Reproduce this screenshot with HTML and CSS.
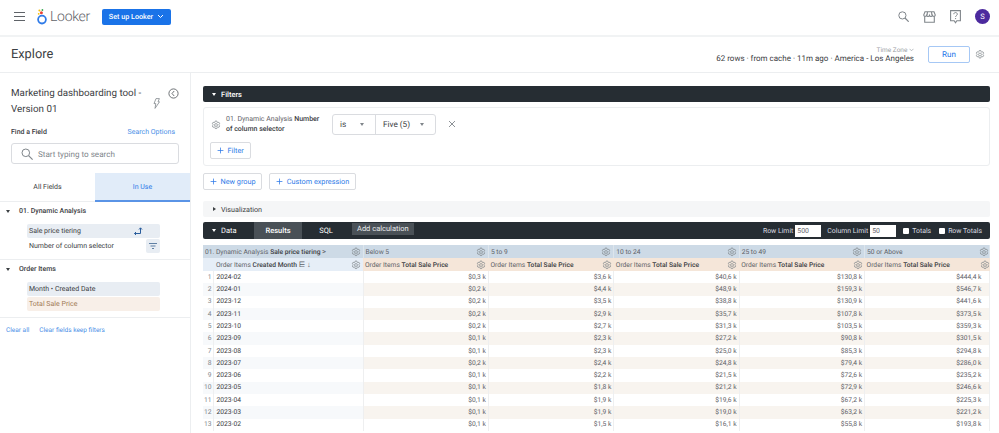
FILE: index.html
```html
<!DOCTYPE html>
<html lang="en">
<head>
    <meta charset="UTF-8">
    <meta name="viewport" content="width=device-width, initial-scale=1.0">
    <title>Explore</title>
    <link rel="stylesheet" href="styles.css">
</head>
<body>
    <svg class="icon-defs" width="0" height="0">
        <symbol id="gear" viewBox="0 0 24 24">
            <path fill="none" stroke="currentColor" stroke-width="1.7" stroke-linejoin="round" d="M10 2.5h4l.6 2.9 1.6.9 2.8-.9 2 3.4-2.2 2v1.4l2.2 2-2 3.4-2.8-.9-1.6.9-.6 2.9h-4l-.6-2.9-1.6-.9-2.8.9-2-3.4 2.2-2v-1.4l-2.2-2 2-3.4 2.8.9 1.6-.9z"/>
            <circle cx="12" cy="12" r="3.4" fill="none" stroke="currentColor" stroke-width="1.7"/>
        </symbol>
        <symbol id="plus" viewBox="0 0 12 12">
            <path fill="none" stroke="currentColor" stroke-width="1.3" d="M6 1v10M1 6h10"/>
        </symbol>
    </svg>

    <header class="topbar">
        <button class="menu-btn" aria-label="Menu"><span></span><span></span><span></span></button>
        <div class="logo">
            <svg width="10" height="16" viewBox="0 0 10 16">
                <circle cx="5" cy="10.6" r="3.900" fill="none" stroke="#2f7be8" stroke-width="1.800"/>
                <circle cx="4.400" cy="3.800" r="1.500" fill="#ea4335"/>
                <circle cx="2.400" cy="1.500" r="1" fill="#fbbc04"/>
                <circle cx="5.400" cy="1" r=".9" fill="#34a853"/>
                <circle cx="1.700" cy="4.800" r=".9" fill="#fbbc04"/>
            </svg>
            <span class="logo-text">Looker</span>
        </div>
        <button class="setup-btn">Set up Looker
            <svg width="7" height="5" viewBox="0 0 7 5"><path d="M1 1l2.5 2.5L6 1" fill="none" stroke="#fff" stroke-width="1"/></svg>
        </button>
        <div class="topbar-icons">
            <svg width="11" height="11" viewBox="0 0 11 11"><circle cx="4.400" cy="4.400" r="3.600" fill="none" stroke="#80868b" stroke-width="1"/><path d="M7 7l3.700 3.700" stroke="#80868b" stroke-width="1.200"/></svg>
            <svg width="13" height="12" viewBox="0 0 13 12"><path d="M2 .7h9l1.3 3.4c0 1.700-2.400 1.700-2.900.2-.4 1.500-2.400 1.500-2.900 0-.5 1.500-2.500 1.500-2.900 0-.5 1.500-2.900 1.500-2.900-.2zM1.700 5.500v5.800h9.600V5.500M4.500 .7l-.4 3.400M8.500 .7l.4 3.400" fill="none" stroke="#80868b" stroke-width="1.100"/></svg>
            <svg width="11" height="14" viewBox="0 0 11 14"><path d="M.6 .6h9.800v10.200H6.800l-1.300 2-1.300-2H.6z" fill="none" stroke="#80868b" stroke-width="1.100"/><path d="M3.800 4.200c0-2.200 3.500-2.200 3.500 0 0 1.400-1.700 1.300-1.700 2.800M5.600 8v1.100" fill="none" stroke="#80868b" stroke-width="1"/></svg>
            <div class="avatar">S</div>
        </div>
    </header>

    <div class="subbar">
        <h1>Explore</h1>
        <div class="run-info">
            <div class="timezone">Time Zone <svg width="5" height="4" viewBox="0 0 5 4"><path d="M.5 .8l2 2 2-2" fill="none" stroke="#9aa0a6" stroke-width=".7"/></svg></div>
            <div>62 rows · from cache · 11m ago · America - Los Angeles</div>
        </div>
        <button class="run-btn">Run</button>
        <svg class="gear run-gear"><use href="#gear"/></svg>
    </div>

    <div class="content">
        <aside class="sidebar">
            <div class="title-row">
                <h2>Marketing dashboarding tool - Version 01</h2>
                <svg class="bolt" width="7" height="11" viewBox="0 0 7 11"><path d="M3 .6h3.400L5 3.800h1.500L2 10.400l.8-4.800H1z" fill="none" stroke="#80868b" stroke-width=".8"/></svg>
                <svg class="history" width="11" height="11" viewBox="0 0 11 11"><circle cx="5.500" cy="5.500" r="4.600" fill="none" stroke="#5f6368" stroke-width=".9"/><path d="M6.200 3L4 5.500 6.200 8" fill="none" stroke="#5f6368" stroke-width=".9"/></svg>
            </div>
            <div class="find-row">
                <span class="find-label">Find a Field</span>
                <a class="link">Search Options</a>
            </div>
            <div class="search-box">
                <svg width="12" height="12" viewBox="0 0 12 12"><circle cx="4.800" cy="4.800" r="3.800" fill="none" stroke="#80868b" stroke-width="1"/><path d="M7.600 7.600l4 4" stroke="#80868b" stroke-width="1.100"/></svg>
                <span>Start typing to search</span>
            </div>
            <div class="tabs">
                <div class="tab">All Fields</div>
                <div class="tab tab-active">In Use</div>
            </div>
            <section class="field-group">
                <div class="group-title"><i class="caret"></i>01. Dynamic Analysis</div>
                <div class="field field-dim">Sale price tiering
                    <svg class="pivot" width="9" height="8" viewBox="0 0 9 8"><path d="M.5 6.500h6V1M5 2.500L6.500 .8 8 2.500M2 5L.5 6.500 2 8" fill="none" stroke="#2a5d9c" stroke-width="1"/></svg>
                </div>
                <div class="field">Number of column selector
                    <span class="filter-chip"><svg width="8" height="6" viewBox="0 0 8 6"><path d="M0 .5h8M1.500 3h5M3 5.500h2" stroke="#5f7fa3" stroke-width="1"/></svg></span>
                </div>
            </section>
            <section class="field-group">
                <div class="group-title"><i class="caret"></i>Order Items</div>
                <div class="field field-dim">Month • Created Date</div>
                <div class="field field-measure">Total Sale Price</div>
            </section>
            <div class="clear-links">
                <a class="link">Clear all</a>
                <a class="link">Clear fields keep filters</a>
            </div>
        </aside>

        <main class="main">
            <div class="dark-bar filters-bar"><i class="caret caret-white"></i>Filters</div>
            <div class="filter-card">
                <div class="filter-row">
                    <svg class="gear filter-gear"><use href="#gear"/></svg>
                    <div class="filter-name">01. Dynamic Analysis <b>Number</b><br><b>of column selector</b></div>
                    <div class="select-group">
                        <div class="select select-is">is<i class="caret caret-gray"></i></div>
                        <div class="select select-five">Five (5)<i class="caret caret-gray"></i></div>
                    </div>
                    <svg class="close" width="8" height="8" viewBox="0 0 8 8"><path d="M1 1l6 6M7 1L1 7" stroke="#80868b" stroke-width=".9"/></svg>
                </div>
                <button class="outline-btn filter-btn"><svg class="plus"><use href="#plus"/></svg>Filter</button>
            </div>
            <div class="group-actions">
                <button class="outline-btn"><svg class="plus"><use href="#plus"/></svg>New group</button>
                <button class="outline-btn"><svg class="plus"><use href="#plus"/></svg>Custom expression</button>
            </div>
            <div class="viz-bar"><i class="caret-right"></i>Visualization</div>
            <div class="dark-bar data-bar">
                <span class="data-label"><i class="caret caret-white"></i>Data</span>
                <span class="data-tab data-tab-active">Results</span>
                <span class="data-tab">SQL</span>
                <span class="add-calc">Add calculation</span>
                <div class="limits">
                    <label>Row Limit <span class="limit-input">500</span></label>
                    <label>Column Limit <span class="limit-input">50</span></label>
                    <label class="totals"><span class="check"></span>Totals</label>
                    <label class="row-totals"><span class="check"></span>Row Totals</label>
                </div>
            </div>
            <table class="results">
                <colgroup>
                    <col class="col-index"><col class="col-dim">
                    <col class="col-val"><col class="col-val"><col class="col-val"><col class="col-val"><col class="col-val">
                </colgroup>
                <thead>
                    <tr class="pivot-row">
                        <th colspan="2"><div class="th-wrap"><span>01. Dynamic Analysis <b>Sale price tiering</b> <span class="chev">&gt;</span></span><svg class="gear"><use href="#gear"/></svg></div></th>
                        <th><div class="th-wrap"><span>Below 5</span><svg class="gear"><use href="#gear"/></svg></div></th>
                        <th><div class="th-wrap"><span>5 to 9</span><svg class="gear"><use href="#gear"/></svg></div></th>
                        <th><div class="th-wrap"><span>10 to 24</span><svg class="gear"><use href="#gear"/></svg></div></th>
                        <th><div class="th-wrap"><span>25 to 49</span><svg class="gear"><use href="#gear"/></svg></div></th>
                        <th><div class="th-wrap"><span>50 or Above</span><svg class="gear"><use href="#gear"/></svg></div></th>
                    </tr>
                    <tr class="label-row">
                        <th colspan="2" class="th-dim"><div class="th-wrap th-indent"><span>Order Items <b>Created Month</b> <span class="sort">⋿ ↓</span></span><svg class="gear"><use href="#gear"/></svg></div></th>
                        <th class="th-measure"><div class="th-wrap"><span>Order Items <b>Total Sale Price</b></span><svg class="gear"><use href="#gear"/></svg></div></th>
                        <th class="th-measure"><div class="th-wrap"><span>Order Items <b>Total Sale Price</b></span><svg class="gear"><use href="#gear"/></svg></div></th>
                        <th class="th-measure"><div class="th-wrap"><span>Order Items <b>Total Sale Price</b></span><svg class="gear"><use href="#gear"/></svg></div></th>
                        <th class="th-measure"><div class="th-wrap"><span>Order Items <b>Total Sale Price</b></span><svg class="gear"><use href="#gear"/></svg></div></th>
                        <th class="th-measure"><div class="th-wrap"><span>Order Items <b>Total Sale Price</b></span><svg class="gear"><use href="#gear"/></svg></div></th>
                    </tr>
                </thead>
                <tbody>
                    <tr><td>1</td><td>2024-02</td><td>$0,3 k</td><td>$3,6 k</td><td>$40,6 k</td><td>$130,8 k</td><td>$444,4 k</td></tr>
                    <tr><td>2</td><td>2024-01</td><td>$0,2 k</td><td>$4,4 k</td><td>$48,9 k</td><td>$159,3 k</td><td>$546,7 k</td></tr>
                    <tr><td>3</td><td>2023-12</td><td>$0,2 k</td><td>$3,5 k</td><td>$38,8 k</td><td>$130,9 k</td><td>$441,6 k</td></tr>
                    <tr><td>4</td><td>2023-11</td><td>$0,2 k</td><td>$2,9 k</td><td>$35,7 k</td><td>$107,8 k</td><td>$373,5 k</td></tr>
                    <tr><td>5</td><td>2023-10</td><td>$0,2 k</td><td>$2,7 k</td><td>$31,3 k</td><td>$103,5 k</td><td>$359,3 k</td></tr>
                    <tr><td>6</td><td>2023-09</td><td>$0,1 k</td><td>$2,3 k</td><td>$27,2 k</td><td>$90,8 k</td><td>$301,5 k</td></tr>
                    <tr><td>7</td><td>2023-08</td><td>$0,1 k</td><td>$2,3 k</td><td>$25,0 k</td><td>$85,3 k</td><td>$294,8 k</td></tr>
                    <tr><td>8</td><td>2023-07</td><td>$0,2 k</td><td>$2,4 k</td><td>$24,8 k</td><td>$79,4 k</td><td>$286,0 k</td></tr>
                    <tr><td>9</td><td>2023-06</td><td>$0,1 k</td><td>$2,2 k</td><td>$21,5 k</td><td>$72,6 k</td><td>$235,2 k</td></tr>
                    <tr><td>10</td><td>2023-05</td><td>$0,1 k</td><td>$1,8 k</td><td>$21,2 k</td><td>$72,9 k</td><td>$246,6 k</td></tr>
                    <tr><td>11</td><td>2023-04</td><td>$0,1 k</td><td>$1,9 k</td><td>$19,6 k</td><td>$67,2 k</td><td>$225,3 k</td></tr>
                    <tr><td>12</td><td>2023-03</td><td>$0,1 k</td><td>$1,9 k</td><td>$19,0 k</td><td>$63,2 k</td><td>$221,2 k</td></tr>
                    <tr><td>13</td><td>2023-02</td><td>$0,1 k</td><td>$1,5 k</td><td>$16,1 k</td><td>$55,8 k</td><td>$193,8 k</td></tr>
                </tbody>
            </table>
        </main>
    </div>
</body>
</html>
```

FILE: styles.css
```css
* {
    box-sizing: border-box;
}

html, body {
    height: 433px;
}

body {
    margin: 0;
    font-family: Roboto, 'Liberation Sans', sans-serif;
    color: #3c4043;
    background-color: #fff;
    overflow: hidden;
    text-rendering: geometricPrecision;
}

button {
    font-family: inherit;
    text-rendering: inherit;
    cursor: pointer;
}

.icon-defs {
    position: absolute;
}

.link {
    color: #4a8fe7;
}

.gear {
    width: 10px;
    height: 10px;
    color: #80868b;
    flex-shrink: 0;
}

.plus {
    width: 7px;
    height: 7px;
    margin-right: 4px;
}

/* small triangles */
.caret {
    display: inline-block;
    width: 0;
    height: 0;
    border-left: 2.5px solid transparent;
    border-right: 2.5px solid transparent;
    border-top: 3px solid #3c4043;
}

.caret-white {
    border-top-color: #fff;
}

.caret-gray {
    border-top-color: #80868b;
}

.caret-right {
    width: 0;
    height: 0;
    border-top: 2.5px solid transparent;
    border-bottom: 2.5px solid transparent;
    border-left: 3px solid #3c4043;
    margin-right: 5px;
}

/* top bar */
.topbar {
    height: 37px;
    display: flex;
    align-items: center;
    padding: 0 9px 2px 14px;
    border-bottom: 2px solid #f1f3f4;
}

.menu-btn {
    width: 11px;
    height: 9px;
    padding: 0;
    border: none;
    background: none;
    display: flex;
    flex-direction: column;
    justify-content: space-between;
}

.menu-btn span {
    display: block;
    height: 1px;
    background-color: #5f6368;
}

.logo {
    display: flex;
    align-items: center;
    margin-left: 12px;
    gap: 3px;
}

.logo-text {
    font-size: 14px;
    font-weight: 300;
    letter-spacing: -0.3px;
    color: #5f6368;
}

.setup-btn {
    height: 16px;
    width: 69px;
    margin-left: 12px;
    padding: 0;
    border: none;
    border-radius: 2px;
    background-color: #1a73e8;
    color: #fff;
    font-size: 7.2px;
    font-weight: 500;
    display: flex;
    align-items: center;
    justify-content: center;
    gap: 4px;
}

.topbar-icons {
    margin-left: auto;
    display: flex;
    align-items: center;
    gap: 14px;
}

.avatar {
    width: 15px;
    height: 15px;
    border-radius: 50%;
    background-color: #4c2a9e;
    color: #fff;
    font-size: 7.5px;
    display: flex;
    align-items: center;
    justify-content: center;
}

/* explore bar */
.subbar {
    height: 36px;
    display: flex;
    align-items: center;
    padding: 0 14px 0 11px;
    border-bottom: 1px solid #eceef0;
}

.subbar h1 {
    margin: 0;
    font-size: 12.8px;
    font-weight: 400;
    color: #3c4043;
    margin-right: auto;
}

.run-info {
    font-size: 8px;
    text-align: right;
    line-height: 9px;
    color: #3c4043;
}

.timezone {
    font-size: 6.5px;
    color: #9aa0a6;
    line-height: 7px;
}

.run-btn {
    width: 42px;
    height: 17px;
    margin-left: 14px;
    padding: 0;
    border: 1px solid #a6c8f5;
    border-radius: 2px;
    background-color: #fff;
    color: #1a73e8;
    font-size: 8px;
}

.run-gear {
    width: 10px;
    height: 11px;
    margin-left: 5px;
}

.content {
    display: flex;
    height: 360px;
}

/* left column */
.sidebar {
    width: 191px;
    flex-shrink: 0;
    border-right: 1px solid #eceef0;
}

.title-row {
    display: flex;
    padding: 13px 0 0 11px;
    height: 55px;
}

.title-row h2 {
    width: 140px;
    margin: 0;
    font-size: 9.8px;
    font-weight: 400;
    line-height: 16px;
    color: #3c4043;
}

.bolt {
    margin: 12px 0 0 1.5px;
}

.history {
    margin: 2px 0 0 8.5px;
}

.find-row {
    display: flex;
    justify-content: space-between;
    padding: 0 15px 0 11px;
    font-size: 7px;
    line-height: 9px;
    height: 15px;
}

.find-label {
    font-weight: 500;
}

.search-box {
    height: 21px;
    margin: 0 11px;
    padding-left: 9px;
    display: flex;
    align-items: center;
    gap: 5px;
    border: 1px solid #dadce0;
    border-radius: 3px;
    font-size: 8.1px;
    color: #80868b;
}

.tabs {
    display: flex;
    margin-top: 9px;
    height: 29px;
}

.tab {
    flex: 1;
    display: flex;
    align-items: center;
    justify-content: center;
    font-size: 7px;
    border-bottom: 1px solid #eceef0;
}

.tab-active {
    background-color: #e1ecf9;
    color: #2f7be8;
    border-bottom: 2px solid #5a94e6;
}

.field-group {
    padding-bottom: 5px;
    border-bottom: 1px solid #eceef0;
}

.group-title {
    display: flex;
    align-items: center;
    height: 22px;
    padding: 0 0 4px 6px;
    font-size: 7px;
    font-weight: 500;
}

.group-title .caret {
    margin-right: 9px;
}

.field {
    width: 133px;
    height: 14px;
    margin: 0 0 1px 27px;
    padding-left: 2px;
    display: flex;
    align-items: center;
    justify-content: space-between;
    border-radius: 2px;
    font-size: 7px;
}

.field-dim {
    background-color: #e8edf3;
}

.field-measure {
    background-color: #f8efe8;
    color: #a07a55;
}

.pivot {
    margin-right: 17px;
}

.filter-chip {
    width: 14px;
    height: 14px;
    display: flex;
    align-items: center;
    justify-content: center;
    background-color: #e8edf3;
    border-radius: 2px;
}

.clear-links {
    padding: 8px 0 0 6px;
    font-size: 6.5px;
    display: flex;
    gap: 10px;
}

/* right column */
.main {
    flex: 1;
    min-width: 0;
    padding: 13px 9px 0 12px;
}

.dark-bar {
    display: flex;
    align-items: center;
    background-color: #262d33;
    color: #fff;
    border-radius: 2px;
    font-size: 7.500px;
}

.filters-bar {
    height: 16px;
    padding-left: 9px;
    font-weight: 500;
}

.filters-bar .caret {
    margin-right: 5px;
}

.filter-card {
    height: 59px;
    margin-top: 5px;
    padding: 7px 6px 0;
    border: 1px solid #eceef0;
    border-radius: 3px;
}

.filter-row {
    display: flex;
    align-items: flex-start;
    height: 27px;
}

.filter-gear {
    margin: 5px 5px 0 1px;
}

.filter-name {
    width: 106px;
    font-size: 7px;
    line-height: 9.500px;
    color: #5f6368;
}

.filter-name b {
    font-weight: 500;
    color: #3c4043;
}

.select-group {
    display: flex;
    height: 21px;
    margin: -1px 0 0 0;
    border: 1px solid #dadce0;
    border-radius: 3px;
    font-size: 8.2px;
}

.select {
    display: flex;
    align-items: center;
    justify-content: space-between;
    padding: 0 11px 0 7px;
}

.select-is {
    width: 43px;
    border-right: 1px solid #dadce0;
}

.select-five {
    width: 59px;
}

.close {
    margin: 5px 0 0 12px;
}

.outline-btn {
    height: 17px;
    padding: 0 5.5px;
    display: inline-flex;
    align-items: center;
    background-color: #fff;
    border: 1px solid #dadce0;
    border-radius: 2px;
    color: #2f7be8;
    font-size: 7.3px;
}

.filter-btn {
    display: flex;
    width: 41px;
}

.group-actions {
    display: flex;
    gap: 7px;
    margin-top: 7px;
}

.viz-bar {
    display: flex;
    align-items: center;
    height: 16px;
    margin-top: 11px;
    padding-left: 10px;
    background-color: #f5f6f7;
    border-radius: 2px;
    font-size: 7.2px;
}

.data-bar {
    height: 17px;
    margin-top: 5px;
}

.data-label {
    display: flex;
    align-items: center;
    width: 51px;
    padding-left: 9px;
}

.data-label .caret {
    margin-right: 5px;
}

.data-tab {
    display: flex;
    align-items: center;
    justify-content: center;
    height: 100%;
    width: 48px;
}

.data-tab-active {
    background-color: #4a5157;
    font-weight: 500;
}

.add-calc {
    height: 12px;
    margin: -4px 0 0 2px;
    padding: 0 5px;
    display: flex;
    align-items: center;
    background-color: #4a5157;
    color: #e8eaed;
}

.limits {
    margin-left: auto;
    display: flex;
    align-items: center;
    gap: 6px;
    padding-right: 8px;
    font-size: 6.900px;
    color: #dadce0;
}

.limits label {
    display: flex;
    align-items: center;
    gap: 1px;
}

.limits .totals {
    margin-left: 1px;
}

.limits .row-totals {
    margin-left: 2px;
}

.limit-input {
    width: 26px;
    height: 12px;
    margin-left: 1px;
    padding-left: 2px;
    display: flex;
    align-items: center;
    background-color: #fff;
    color: #5f6368;
}

.check {
    width: 6px;
    height: 6px;
    margin-right: 2px;
    background-color: #fff;
    border-radius: 1px;
}

/* results table */
.results {
    width: 787px;
    margin-top: 6px;
    border-collapse: collapse;
    table-layout: fixed;
    font-size: 6.700px;
    color: #5f6368;
}

.col-index {
    width: 10px;
}

.col-dim {
    width: 150px;
}

.col-val {
    width: 125.400px;
}

.results th {
    height: 13px;
    padding: 0;
    font-weight: 400;
    text-align: left;
    white-space: nowrap;
}

.results b {
    font-weight: 500;
    color: #3c4043;
}

.th-wrap {
    display: flex;
    align-items: center;
    justify-content: space-between;
    padding: 0 2px;
}

.results th:last-child .th-wrap {
    padding-right: 0;
}

.th-indent {
    padding-left: 13px;
}

.chev,
.sort {
    font-size: 7.500px;
}

.pivot-row th {
    background-color: #cddae6;
    border-right: 1px solid #dde5ec;
}

.th-dim {
    background-color: #e6eef7;
}

.th-measure {
    background-color: #f5e6d9;
}

.results td {
    height: 12.300px;
    padding: 0 2px;
    line-height: 1;
    text-align: right;
    border-right: 1px solid #eeeff0;
    white-space: nowrap;
}

.results td:nth-child(1) {
    color: #80868b;
    padding: 0 1px 0 0;
}

.results td:nth-child(2) {
    text-align: left;
    padding-left: 3px;
    color: #3c4043;
}

.results td:last-child {
    padding-right: 8px;
}

.results tbody tr:nth-child(even) td {
    background-color: #f8f4ef;
}

.results tbody tr:nth-child(even) td:nth-child(1),
.results tbody tr:nth-child(even) td:nth-child(2) {
    background-color: #f7f9fb;
}

.results tbody td:nth-child(1) {
    background-color: #fff;
}
```
